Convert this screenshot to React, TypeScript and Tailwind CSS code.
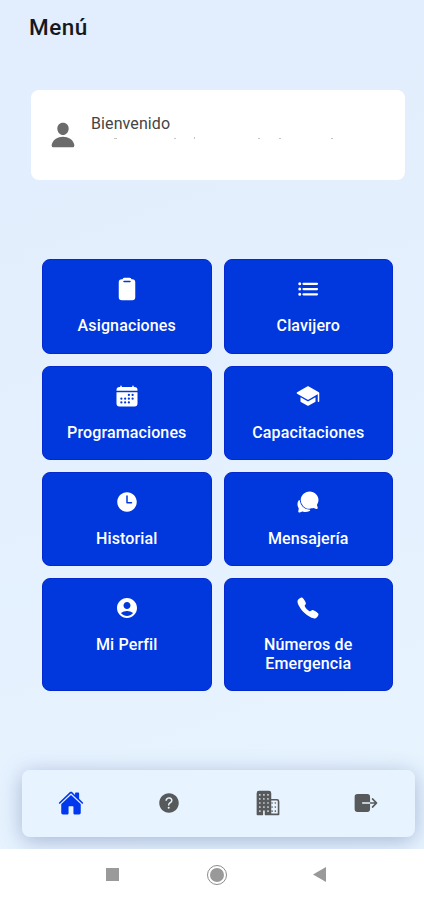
import React, { useState } from "react";
import {
	IoBusiness,
	IoCalendar,
	IoCall,
	IoChatbubbles,
	IoClipboard,
	IoExit,
	IoHelpCircle,
	IoHome,
	IoList,
	IoPerson,
	IoSchool,
	IoTime,
} from "react-icons/io5";
import { MdAccountCircle } from "react-icons/md";

const menuItems = [
	{ label: "Asignaciones", icon: IoClipboard },
	{ label: "Clavijero", icon: IoList },
	{ label: "Programaciones", icon: IoCalendar },
	{ label: "Capacitaciones", icon: IoSchool },
	{ label: "Historial", icon: IoTime },
	{ label: "Mensajería", icon: IoChatbubbles },
	{ label: "Mi Perfil", icon: MdAccountCircle },
	{ label: "Números de Emergencia", icon: IoCall },
];

const tabs = [
	{ name: "home", icon: IoHome },
	{ name: "help", icon: IoHelpCircle },
	{ name: "business", icon: IoBusiness },
	{ name: "exit", icon: IoExit },
];

export default function App() {
	const [activeTab, setActiveTab] = useState("home");

	return (
		<div className="flex h-[900px] w-[424px] flex-col overflow-hidden bg-white font-['Roboto',sans-serif]">
			<div className="flex h-[849px] flex-col overflow-hidden bg-linear-160 from-[#e2edfd] via-[#e4f0fe] to-[#e8f5ff]">
				<h1 className="ml-[29px] mt-3 h-[30px] text-[22.5px] font-medium leading-[30px] tracking-[0.5px] text-[#15181c]">
					Menú
				</h1>

				<div className="ml-[31px] mt-12 flex h-[90px] w-[374px] rounded-lg bg-white">
					<IoPerson className="ml-[18px] mt-[31px] size-7 text-[#6b6b6b]" />
					<div className="ml-[14px] mt-6">
						<p className="text-base leading-5 tracking-[0.1px] text-[#444]">
							Bienvenido
						</p>
						{/* tops of the hidden user name */}
						<svg className="mt-[3px]" width="250" height="3" viewBox="0 0 250 3" fill="#c4c4c4">
							<path d="M23 1h3v1h-3zM83 1h2v1h-2zM103 0h1v2h-1zM167 1h2v1h-2zM188 1h2v1h-2zM240 1h2v1h-2z" />
						</svg>
					</div>
				</div>

				<div className="ml-[42px] mt-[79.4px] grid w-[351px] grid-cols-2 gap-3">
					{menuItems.map((item) => (
						<button
							key={item.label}
							className="flex min-h-[94.3px] cursor-pointer flex-col items-center rounded-lg border border-[#0429cf] bg-[#0038de] px-7 py-[17px] text-white">
							<item.icon size={24} />
							<span className="mt-[15px] text-base font-medium leading-[19px] tracking-[0.13px]">
								{item.label}
							</span>
						</button>
					))}
				</div>

				<nav className="ml-[22px] mt-[78.7px] grid h-[67px] w-[393px] shrink-0 grid-cols-4 items-center rounded-lg bg-[#e7f4ff] shadow-[0_4px_22px_rgba(60,80,150,0.38)]">
					{tabs.map((tab) => (
						<button
							key={tab.name}
							onClick={() => setActiveTab(tab.name)}
							className={`flex cursor-pointer justify-center ${
								activeTab === tab.name ? "text-[#0038ee]" : "text-[#58595b]"
							}`}>
							<tab.icon size={26} />
						</button>
					))}
				</nav>
			</div>

			<div className="flex h-[51px] items-center bg-white">
				<div className="ml-[106px] size-[13px] bg-[#9a9a9a]" />
				<div className="ml-[88px] flex size-5 items-center justify-center rounded-full border border-[#8c8c8c]">
					<div className="size-[14px] rounded-full bg-[#999]" />
				</div>
				<svg className="ml-[86px]" width="13" height="15" viewBox="0 0 13 15">
					<path d="M13 0v15L0 7.5z" fill="#999" />
				</svg>
			</div>
		</div>
	);
}
